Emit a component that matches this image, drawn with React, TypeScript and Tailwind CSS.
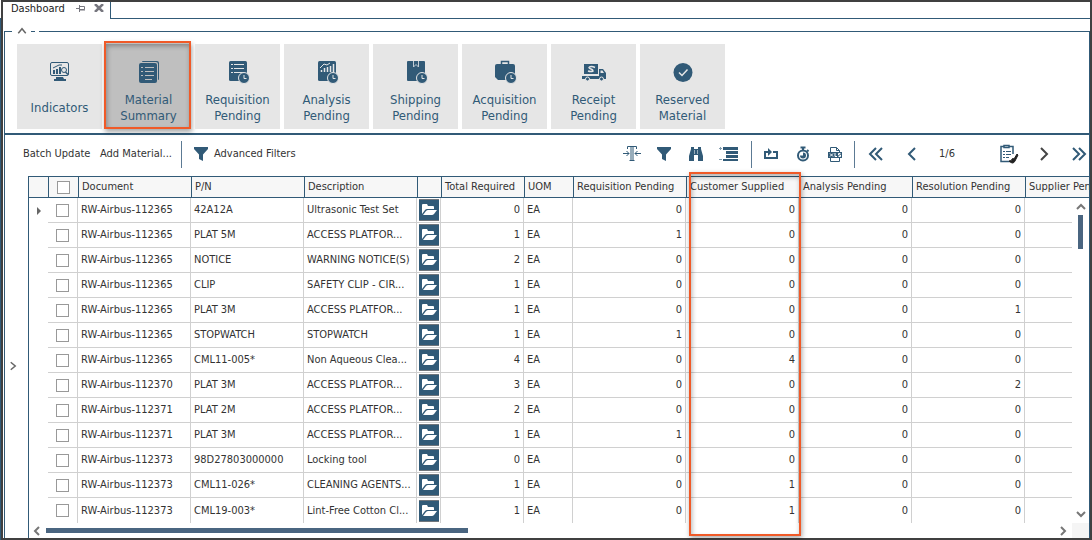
import type { ReactNode } from "react";

interface MaterialRow {
  doc: string;
  pn: string;
  desc: string;
  total: number;
  requisition: number;
  supplied: number;
  analysis: number;
  resolution: number;
}

function row(doc: string, pn: string, desc: string, total: number, requisition: number, supplied: number, resolution: number): MaterialRow {
  return { doc: `RW-Airbus-${doc}`, pn, desc, total, requisition, supplied, analysis: 0, resolution };
}

const rows: MaterialRow[] = [
  row("112365", "42A12A", "Ultrasonic Test Set", 0, 0, 0, 0),
  row("112365", "PLAT 5M", "ACCESS PLATFOR...", 1, 1, 0, 0),
  row("112365", "NOTICE", "WARNING NOTICE(S)", 2, 0, 0, 0),
  row("112365", "CLIP", "SAFETY CLIP - CIR...", 1, 0, 0, 0),
  row("112365", "PLAT 3M", "ACCESS PLATFOR...", 1, 0, 0, 1),
  row("112365", "STOPWATCH", "STOPWATCH", 1, 1, 0, 0),
  row("112365", "CML11-005*", "Non Aqueous Clea...", 4, 0, 4, 0),
  row("112370", "PLAT 3M", "ACCESS PLATFOR...", 3, 0, 0, 2),
  row("112371", "PLAT 2M", "ACCESS PLATFOR...", 2, 0, 0, 0),
  row("112371", "PLAT 3M", "ACCESS PLATFOR...", 1, 1, 0, 0),
  row("112373", "98D27803000000", "Locking tool", 0, 0, 0, 0),
  row("112373", "CML11-026*", "CLEANING AGENTS...", 1, 0, 1, 0),
  row("112373", "CML19-003*", "Lint-Free Cotton Cl...", 1, 0, 1, 0),
];

const headers = ["Document", "P/N", "Description", "", "Total Required", "UOM", "Requisition Pending", "Customer Supplied", "Analysis Pending", "Resolution Pending"];

function Clock() {
  return (
    <>
      <circle cx="18" cy="18" r="5.5" fill="#315a77" stroke="#e6e6e6" />
      <path d="M18 15v3.5h2.5" fill="none" stroke="#e6e6e6" />
    </>
  );
}

const tiles: { lines: string[]; active?: boolean; icon: ReactNode }[] = [
  {
    lines: ["Indicators"],
    icon: (
      <>
        <rect x="2.5" y="2.5" width="18" height="13" rx="1.5" fill="none" stroke="#315a77" />
        <path d="M5 10h2v4H5zM8 9h2v5H8zM11 7h2v7h-2zM8 17h7l1 2h2v2H6v-2h2z" />
        <path d="M5 8l6-3 3 0" fill="none" stroke="#315a77" />
        <circle cx="16" cy="10" r="2.5" fill="#e6e6e6" stroke="#315a77" />
        <path d="M17.5 12l2.5 2.5" stroke="#315a77" strokeWidth="1.5" />
      </>
    ),
  },
  {
    lines: ["Material", "Summary"],
    active: true,
    icon: (
      <>
        <path d="M6 1h14q2 0 2 2v16q0 1-1 1V4q0-2-2-2H5q0-1 1-1z" />
        <rect x="2" y="3" width="18" height="20" rx="2" />
        <path d="M4 7.5h2M8 7.5h9M4 11.5h2M8 11.5h9M4 15.5h2M8 15.5h9M8 19.5h7" stroke="#bfbfbf" />
      </>
    ),
  },
  {
    lines: ["Requisition", "Pending"],
    icon: (
      <>
        <rect x="3" y="1" width="18" height="20" rx="1.5" />
        <path d="M5 4.5h2M8 4.5h10M5 8.5h2M8 8.5h10M5 12.5h2M8 12.5h10" stroke="#e6e6e6" />
        <Clock />
      </>
    ),
  },
  {
    lines: ["Analysis", "Pending"],
    icon: (
      <>
        <rect x="3" y="1" width="18" height="20" rx="1.5" />
        <path d="M6.5 12v-2M9.5 12V8M12.5 12V7M15.5 12V6M18.5 12V4" stroke="#e6e6e6" strokeWidth="1.5" />
        <path d="M5 8l4-4 3 1 3-2" fill="none" stroke="#e6e6e6" />
        <Clock />
      </>
    ),
  },
  {
    lines: ["Shipping", "Pending"],
    icon: (
      <>
        <rect x="3" y="1" width="18" height="20" rx="1" />
        <path d="M9.5 1v6l2.5-2.5 2.5 2.5V1" fill="none" stroke="#c3cdd5" />
        <Clock />
      </>
    ),
  },
  {
    lines: ["Acquisition", "Pending"],
    icon: (
      <>
        <path d="M8.5 5V1.5h7V5" fill="none" stroke="#315a77" strokeWidth="1.5" />
        <path d="M2 6q0-2 2-2h16q2 0 2 2v14H5l-3-3z" />
        <Clock />
      </>
    ),
  },
  {
    lines: ["Receipt", "Pending"],
    icon: (
      <>
        <path d="M2 4h14v10H2zM0 16h17v3H0z" />
        <path d="M17 9h4l3 4v6h-7z" />
        <path d="M18.5 10.5h2l1.5 2.5h-3.500z" fill="#e6e6e6" />
        <path d="M13 7.500q-4-2-6 0 0 1 2 1.500t2 2q-2 1-5 0" fill="none" stroke="#e6e6e6" strokeWidth="1.5" />
        <circle cx="5.5" cy="19" r="2" stroke="#e6e6e6" />
        <circle cx="19.5" cy="19" r="2" stroke="#e6e6e6" />
      </>
    ),
  },
  {
    lines: ["Reserved", "Material"],
    icon: (
      <>
        <circle cx="12" cy="12.5" r="9.5" />
        <path d="M8 12.5l3 3 5.5-6" fill="none" stroke="#e6e6e6" strokeWidth="1.5" />
      </>
    ),
  },
];

function Chevron({ d, className = "h-4 w-4" }: { d: string; className?: string }) {
  return (
    <svg viewBox="0 0 16 16" className={className} fill="none" stroke="currentColor" strokeWidth="2">
      <path d={d} />
    </svg>
  );
}

function ArrowButton({ label, d }: { label: string; d: string }) {
  return (
    <button type="button" aria-label={label} className="flex h-3 w-3 shrink-0 items-center justify-center text-[#777]">
      <svg viewBox="0 0 12 12" className="h-3 w-3" fill="none" stroke="currentColor" strokeWidth="2">
        <path d={d} />
      </svg>
    </button>
  );
}

function Funnel() {
  return (
    <svg viewBox="0 0 16 16" className="h-4 w-4" fill="#315a77">
      <path d="M1 1h14v2l-5 5.500V15l-4-2V8.500L1 3z" />
    </svg>
  );
}

function ToolButton({ label, children }: { label: string; children: ReactNode }) {
  return (
    <button type="button" aria-label={label} className="flex h-5 w-5 shrink-0 items-center justify-center">
      {children}
    </button>
  );
}

function Separator() {
  return <div className="h-[27px] w-px shrink-0 bg-[#5c7a94]" />;
}

function TabStrip() {
  return (
    <div className="flex h-[17px]">
      <div className="flex w-[108px] items-start border-r border-[#315a77] pl-2 leading-[13px] text-[#222]">
        <span className="w-[65px]">Dashboard</span>
        <button type="button" aria-label="Pin tab" className="mt-[2px]">
          <svg viewBox="0 0 10 8" className="h-2 w-[10px]" fill="none" stroke="#77777f">
            <path d="M0 4.5h3M3.5 1v7M3.5 2.5h5v3h-5M3.5 6h5.5" />
          </svg>
        </button>
        <button type="button" aria-label="Close tab" className="mt-[2px] ml-2">
          <svg viewBox="0 0 10 8" className="h-2 w-[10px]" fill="none" stroke="#77777f" strokeWidth="2.5">
            <path d="M1 0l8 8M9 0L1 8" />
          </svg>
        </button>
      </div>
      <div className="flex-1 border-b border-[#315a77]" />
    </div>
  );
}

function TileBar() {
  return (
    <div className="border-b-2 border-[#315a77] pb-1">
      {/* Collapse handle set into the top rule */}
      <div className="flex h-[13px] items-start">
        <div className="w-[7px] border-t border-[#315a77]" />
        <button type="button" aria-label="Collapse" className="-mt-[6px] flex w-[19px] justify-center text-[#666]">
          <Chevron d="M3 11l5-6 5 6" className="h-3 w-3" />
        </button>
        <div className="w-1 border-t border-[#315a77]" />
        <div className="ml-1 flex-1 border-t border-[#315a77]" />
      </div>
      <div className="flex gap-1 pl-3">
        {tiles.map((t) => (
          <button
            key={t.lines[0]}
            type="button"
            className={`relative flex h-[85px] w-[85px] shrink-0 flex-col items-center pt-4 text-[13px] text-[#315a77] ${t.active ? "bg-[#bfbfbf]" : "bg-[#e6e6e6]"}`}
          >
            <svg viewBox="0 0 24 24" className="h-6 w-6 shrink-0" fill="#315a77">
              {t.icon}
            </svg>
            <span className="mt-2 flex h-8 flex-col justify-center">
              {t.lines.map((l) => (
                <span key={l}>{l}</span>
              ))}
            </span>
            {t.active && (
              <span className="absolute -top-[3px] -left-[2px] h-[88px] w-[87px] border-2 border-[#f05a28] shadow-[1px_3px_5px_rgba(0,0,0,0.35),inset_1px_3px_5px_rgba(0,0,0,0.3)]" />
            )}
          </button>
        ))}
      </div>
    </div>
  );
}

function Toolbar() {
  return (
    <div className="flex h-[41px] shrink-0 items-center pb-[3px] pl-[18px] text-[#315a77]">
      <button type="button" className="w-[77px] shrink-0 text-left whitespace-nowrap text-[#333]">Batch Update</button>
      <button type="button" className="w-[81px] shrink-0 text-left whitespace-nowrap text-[#333]">Add Material...</button>
      <Separator />
      <button type="button" className="ml-[11px] flex shrink-0 items-center gap-[5px] whitespace-nowrap text-[#333]">
        <Funnel />
        Advanced Filters
      </button>
      <div className="mr-[13px] ml-auto flex shrink-0 items-center gap-3">
        <ToolButton label="Fit columns">
          <svg viewBox="0 0 18 18" className="h-[18px] w-[18px]" fill="none" stroke="#315a77">
            <path d="M4.5 4V1.5h9V4M8 1.5v14M10 1.5v14M6.5 15.5h5M0 8.5h6M3.5 6l2.5 2.5L3.5 11M18 8.5h-6M14.5 6L12 8.5l2.5 2.5" />
          </svg>
        </ToolButton>
        <ToolButton label="Filter">
          <Funnel />
        </ToolButton>
        <ToolButton label="Find">
          <svg viewBox="0 0 16 16" className="h-4 w-4" fill="#315a77">
            <path d="M3 1h3v2h4V1h3v2l2 7v5h-5V9H6v6H1v-5l2-7z" />
            <path d="M6.500 4v4M9.500 4v4" stroke="white" strokeWidth="0.5" />
          </svg>
        </ToolButton>
        <ToolButton label="Group rows">
          <svg viewBox="0 0 20 16" className="h-4 w-5 shrink-0" fill="#315a77">
            <path d="M5 1h15v3H5zM8 5h12v3H8zM8 9h12v3H8zM5 13h15v2H5z" />
            <path d="M2 1h1v3H2zM1 2h3v1H1zM1 13h3v1H1z" opacity="0.6" />
          </svg>
        </ToolButton>
      </div>
      <Separator />
      <div className="mx-[9px] flex shrink-0 items-center gap-3">
        <ToolButton label="Refresh">
          <svg viewBox="0 0 16 16" className="h-4 w-4" fill="#315a77">
            <path d="M1 5h4V2l4 4-4 4V7H3v4h10V7h-3V5h5v8H1z" />
          </svg>
        </ToolButton>
        <ToolButton label="Timer">
          <svg viewBox="0 0 16 16" className="h-4 w-4" fill="none" stroke="#315a77" strokeWidth="2">
            <circle cx="8" cy="9.5" r="5" />
            <path d="M5.5 1.5h5M8 1v3M12 4l1.5 1.5" />
            <path d="M8 9.5V6.5a3 3 0 1 1-3 3z" fill="#315a77" stroke="none" />
          </svg>
        </ToolButton>
        <ToolButton label="Export to XLS">
          <svg viewBox="0 0 16 16" className="h-4 w-4" fill="none" stroke="#315a77">
            <path d="M3.5 6V1.5h6l3 3V6M9.5 1.5v3h3M3.5 12v3.5h9V12" />
            <rect x="1" y="6" width="14" height="6" fill="#315a77" stroke="none" />
            <path d="M3 7.5l3 3M6 7.5l-3 3M8 7v3.5h2M13.5 7.5h-2V9h2v1.5h-2" stroke="white" />
          </svg>
        </ToolButton>
      </div>
      <Separator />
      <div className="flex shrink-0 items-center pl-[11px]">
        <ToolButton label="First page">
          <Chevron d="M8 2L2 8l6 6M14 2L8 8l6 6" />
        </ToolButton>
        <div className="ml-4 flex items-center">
          <ToolButton label="Previous page">
            <Chevron d="M11 2L5 8l6 6" />
          </ToolButton>
          <span className="w-[50px] text-center text-[#333]">1/6</span>
        </div>
        <div className="ml-[27px] flex items-center gap-[15px]">
          <ToolButton label="Checklist">
            <svg viewBox="0 0 20 20" className="h-5 w-5" fill="none" stroke="#315a77" strokeWidth="1.5">
              <path d="M5 2.5H2v15h9M10 2.5h4V10M5 1.5h5v2H5z" />
              <path d="M4 7.5h2M7 7.5h5M4 10.5h2M7 10.5h5M4 13.5h2M7 13.5h3" strokeWidth="1" />
              <path d="M10 17q3 0 3-2 1-1 2 0l3-5 1 1-3 6q-2 4-6 0z" fill="#222" stroke="#222" strokeWidth="1" />
            </svg>
          </ToolButton>
          <span className="flex text-[#444]">
            <ToolButton label="Next page">
              <Chevron d="M5 2l6 6-6 6" />
            </ToolButton>
          </span>
          <ToolButton label="Last page">
            <Chevron d="M2 2l6 6-6 6M8 2l6 6-6 6" />
          </ToolButton>
        </div>
      </div>
    </div>
  );
}

function FolderButton() {
  return (
    <button type="button" aria-label="Open folder" className="flex h-[22px] w-5 items-center justify-center border-y border-[#70767c] bg-[#315a77]">
      <svg viewBox="0 0 16 14" className="h-[14px] w-4" fill="white">
        <path d="M1 11V2q0-1 1-1h4l1 2h5q1 0 1 1v2H6q-1 0-2 1z" />
        <path d="M2 12l3-4q1-1 2-1h9l-3 4q-1 1-2 1z" />
      </svg>
    </button>
  );
}

function CheckBox({ label }: { label: string }) {
  return <input type="checkbox" aria-label={label} className="mx-auto block h-[13px] w-[13px] appearance-none border border-[#999] bg-white" />;
}

const th = "overflow-hidden border-y border-l border-[#315a77] bg-[#f7f7f7] pl-[3px] text-left font-normal whitespace-nowrap";

function MaterialTable() {
  return (
    <table className="w-full table-fixed border-separate border-spacing-0">
      <colgroup>
        <col className="w-[19px]" />
        <col className="w-[30px]" />
        <col className="w-[113px]" />
        <col className="w-[113px]" />
        <col className="w-[113px]" />
        <col className="w-6" />
        <col className="w-[83px]" />
        <col className="w-[49px]" />
        <col className="w-[113px]" />
        <col className="w-[113px]" />
        <col className="w-[113px]" />
        <col className="w-[113px]" />
        <col />
        <col className="w-[17px]" />
      </colgroup>
      <thead>
        <tr className="h-[22px]">
          <th className="border-y border-[#315a77] bg-[#f7f7f7]" />
          <th className="border-y border-l border-[#315a77] bg-[#f7f7f7]">
            <CheckBox label="Select all" />
          </th>
          {headers.map((h, i) => (
            <th key={i} className={th}>{h}</th>
          ))}
          <th colSpan={2} className={th}>Supplier Pending</th>
        </tr>
      </thead>
      <tbody>
        {rows.map((r, i) => {
          const line = i < rows.length - 1 ? "border-b " : "";
          const td = line + "overflow-hidden border-r border-[#d0d0d0] pl-[3px] whitespace-nowrap";
          const num = line + "overflow-hidden border-r border-[#d0d0d0] pr-[3px] text-right whitespace-nowrap";
          return (
            <tr key={i} className="h-[25px]">
              <td>
                {i === 0 && (
                  <svg viewBox="0 0 6 8" className="ml-[7px] h-2 w-[6px]" fill="#666">
                    <path d="M1 0l4 4-4 4z" />
                  </svg>
                )}
              </td>
              <td className={line + "border-r border-[#d0d0d0]"}>
                <CheckBox label={`Select ${r.pn}`} />
              </td>
              <td className={td}>{r.doc}</td>
              <td className={td}>{r.pn}</td>
              <td className={td}>{r.desc}</td>
              <td className={line + "border-r border-[#d0d0d0] pl-[2px]"}>
                <FolderButton />
              </td>
              <td className={num}>{r.total}</td>
              <td className={td}>EA</td>
              <td className={num}>{r.requisition}</td>
              <td className={num}>{r.supplied}</td>
              <td className={num}>{r.analysis}</td>
              <td className={num}>{r.resolution}</td>
              <td className={line + "border-[#d0d0d0]"} />
              {i === 0 && (
                <td rowSpan={rows.length} className="h-px">
                  <div className="flex h-[325px] flex-col items-center py-[3px]">
                    <ArrowButton label="Scroll up" d="M2 8l4-4 4 4" />
                    <div className="mt-[2px] h-[34px] w-[5px] bg-[#4a6580]" />
                    <div className="flex-1" />
                    <ArrowButton label="Scroll down" d="M2 4l4 4 4-4" />
                  </div>
                </td>
              )}
            </tr>
          );
        })}
      </tbody>
    </table>
  );
}

export default function App() {
  return (
    <div className="flex min-h-screen overflow-hidden bg-white font-['DejaVu_Sans_Condensed','Noto_Sans',sans-serif] text-[11px] leading-4 text-[#333]">
      <div className="flex w-px flex-col pt-[18px]">
        <div className="flex-1 bg-[#315a77]" />
      </div>
      <div className="flex min-w-0 flex-1 flex-col border-2 border-[#404040]">
        <TabStrip />
        <div className="mt-3 ml-px flex flex-1 flex-col border-x border-[#315a77]">
          <TileBar />
          <Toolbar />
          <div className="flex flex-1">
            {/* Collapsed side panel */}
            <div className="flex w-[23px] shrink-0 items-center pl-[2px]">
              <button type="button" aria-label="Expand panel" className="mt-[18px] text-[#666]">
                <Chevron d="M5 3l6 5-6 5" className="h-3 w-3" />
              </button>
            </div>
            <div className="relative flex min-w-0 flex-1 flex-col border-l border-[#315a77]">
              <MaterialTable />
              <div className="flex flex-1 items-center">
                <div className="flex flex-1 items-center pr-[3px] pl-[2px]">
                  <ArrowButton label="Scroll left" d="M8 2L4 6l4 4" />
                  <div className="ml-[3px] h-[5px] w-[422px] bg-[#4a6580]" />
                  <div className="flex-1" />
                  <ArrowButton label="Scroll right" d="M4 2l4 4-4 4" />
                </div>
                <div className="w-[17px] self-stretch bg-[#f5f5f5]" />
              </div>
              <div className="pointer-events-none absolute -top-1 bottom-[2px] left-[660px] w-[112px] border-2 border-[#f05a28] shadow-[1px_2px_5px_rgba(0,0,0,0.35),inset_1px_3px_5px_rgba(0,0,0,0.3)]" />
            </div>
          </div>
        </div>
      </div>
    </div>
  );
}
